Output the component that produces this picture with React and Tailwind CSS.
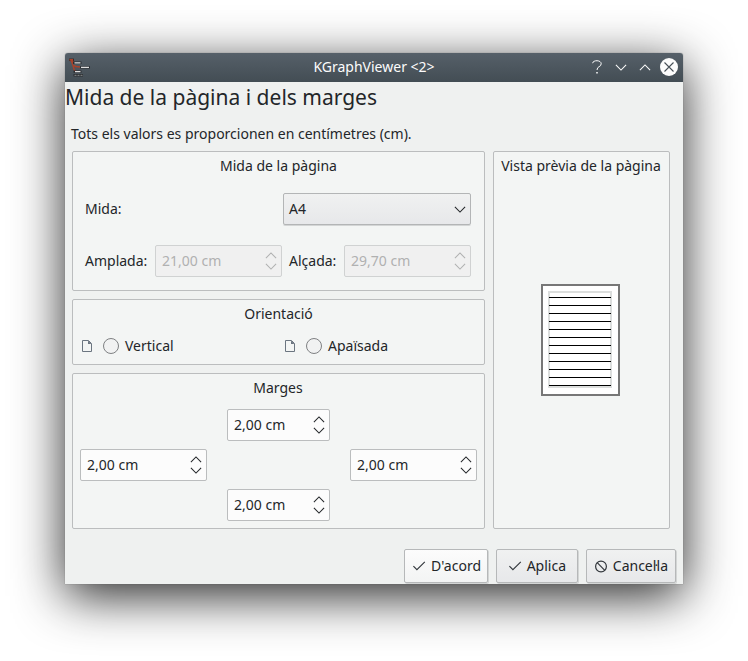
const Chevron = ({ up, className = "" }) => (
  <svg width="12" height="7" viewBox="0 0 12 7" fill="none" stroke="currentColor" strokeWidth="1.05" className={className}>
    <path d={up ? "M0.9 6.1 L6 1 L11.1 6.1" : "M0.9 0.9 L6 6 L11.1 0.9"} />
  </svg>
);

const Spin = ({ value, width, disabled }) => (
  <div
    className={`flex h-8 items-center justify-between rounded-[2px] border pl-1.5 pr-1 ${width} ${
      disabled ? "border-[#d0d2d2] bg-[#f0f0f0] text-[#b0b1b1]" : "border-[#bbbdbe] bg-[#fcfcfc] text-[#232629]"
    }`}
  >
    <span>{value}</span>
    <span className="flex flex-col gap-1">
      <Chevron up />
      <Chevron />
    </span>
  </div>
);

const Group = ({ title, titleClass = "", className = "", children }) => (
  <section className={`flex flex-col rounded-[2px] border border-[#bbbdbe] bg-[#f3f5f4] ${className}`}>
    <h2 className={`h-7 text-center leading-7 ${titleClass}`}>{title}</h2>
    {children}
  </section>
);

const PageIcon = () => (
  <svg width="10" height="12" viewBox="0 0 10 12" fill="none" stroke="#6b7580">
    <path d="M0.5 0.5 H6.5 L9.5 3.5 V11.5 H0.5 Z" />
    <path d="M6 0.5 V4 H9.5 Z" fill="#6b7580" stroke="none" />
  </svg>
);

const Orientation = ({ label, className = "" }) => (
  <div className={`flex items-center ${className}`}>
    <PageIcon />
    <span className="ml-[11px] mr-[6px] h-4 w-4 rounded-full border border-[#7f8183] bg-[#f1f2f2]" />
    <span>{label}</span>
  </div>
);

const Check = () => (
  <svg width="13" height="10" viewBox="0 0 13 10" fill="none" stroke="#31363b" strokeWidth="1.1">
    <path d="M0.4 5.2 L3.9 8.7 L11.8 0.8" />
  </svg>
);

const Forbidden = () => (
  <svg width="13" height="13" viewBox="0 0 13 13" fill="none" stroke="#31363b" strokeWidth="1.2">
    <circle cx="6" cy="6.5" r="5.4" />
    <path d="M2.2 2.7 L9.8 10.3" />
  </svg>
);

const Button = ({ icon, label, className }) => (
  <button className={`flex h-[34px] items-center justify-between rounded-[2px] border border-[#b6b8b9] bg-linear-to-b shadow-[1px_1px_0_#d3d5d5] ${className}`}>
    {icon}
    <span className="whitespace-nowrap">{label}</span>
  </button>
);

const AppLogo = () => (
  <svg width="23" height="20" viewBox="0 0 23 20" fill="none">
    <path d="M1 2.8 H6" stroke="#3a2b2a" strokeWidth="2.5" />
    <path d="M1.5 2.8 H5 M3 3 L5 8.5 L6.2 13 L8 15 M3.5 3 L6 6 M4.5 8 L8 9.5 L12 10" stroke="#a8432b" strokeWidth="1.4" />
    <path d="M5 5.7 H13.5 M12 10.4 H22 M5.5 14.6 H13.5 M5.5 18.3 H15" stroke="#2a2d30" strokeWidth="2.4" />
    <path d="M6.5 5.9 H12.5 M13 10.4 H21 M7 14.6 H12.5" stroke="#dedede" strokeWidth="1.2" />
    <path d="M6.5 18.3 H15" stroke="#8d9092" strokeDasharray="2 1" />
  </svg>
);

const TitleBar = () => (
  <header className="flex h-[29px] items-center rounded-t-[3px] bg-linear-to-b from-[#566069] to-[#434d54] pb-px text-[#fcfcfc]">
    <div className="w-[101px] pl-[3px]">
      <AppLogo />
    </div>
    <div className="flex-1 text-center">KGraphViewer &lt;2&gt;</div>
    <div className="flex w-[101px] items-center pl-[10px]">
      <svg width="10" height="14" viewBox="0 0 10 14" fill="none" stroke="currentColor" strokeWidth="1">
        <path d="M0.6 3.2 C1 -0.2 9.2 -0.2 9.2 3.8 C9.2 7.2 5 6 5 10" />
        <path d="M5 12 V13.5" strokeWidth="1.5" />
      </svg>
      <Chevron className="ml-[13px]" />
      <Chevron up className="ml-3" />
      <svg width="18" height="18" viewBox="0 0 18 18" className="ml-[9px]">
        <circle cx="9" cy="9" r="9" fill="#fcfcfc" />
        <path d="M4.5 4.5 L13.5 13.5 M13.5 4.5 L4.5 13.5" stroke="#475057" strokeWidth="1.1" />
      </svg>
    </div>
  </header>
);

const LINE_KEYS = Array.from({ length: 12 }, (_, i) => i);

const PagePreview = () => (
  <svg width="80" height="112" viewBox="0 0 80 112">
    <rect x="1" y="1" width="77" height="110" fill="#fff" stroke="#777" strokeWidth="2" />
    <rect x="8" y="8" width="62" height="95" fill="none" stroke="#dcdedd" strokeWidth="2" />
    {LINE_KEYS.map((i) => (
      <path key={i} d={`M8 ${13.5 + i * 8} H70`} stroke="#000" />
    ))}
  </svg>
);

export default function App() {
  return (
    <div lang="ca" className="h-[661px] w-[748px] overflow-hidden bg-white pl-[65px] pt-[53px] font-['Noto_Sans',sans-serif] text-[14px] leading-5 text-[#232629]">
      <main className="flex h-[531px] w-[618px] flex-col rounded-t-[3px] bg-[#eff1f0] shadow-[0_0_1px_#555,0_12px_50px_rgba(0,0,0,0.85)]">
        <TitleBar />
        <h1 className="h-[31px] whitespace-nowrap text-[21px] leading-[31px]">Mida de la pàgina i dels marges</h1>
        <p className="mt-[11px] h-5 pl-1.5">Tots els valors es proporcionen en centímetres (cm).</p>
        <div className="mt-[7px] flex gap-2 pl-[7px]">
          <div className="flex w-[413px] flex-col gap-2">
            <Group title="Mida de la pàgina" className="h-[140px]">
              <div className="mt-[13px] flex items-center justify-between pl-3 pr-[13px]">
                <span>Mida:</span>
                <div className="flex h-8 w-[188px] items-center justify-between rounded-[2px] border border-[#b3b5b6] bg-linear-to-b from-[#f0f1f1] to-[#e7e8ea] pl-[5px] pr-1 shadow-[0_1px_0_#d3d5d5]">
                  <span>A4</span>
                  <Chevron />
                </div>
              </div>
              <div className="mt-5 flex items-center pl-3">
                <span className="w-[70px]">Amplada:</span>
                <Spin value="21,00 cm" width="w-[127px]" disabled />
                <span className="w-[62px] pl-[7px]">Alçada:</span>
                <Spin value="29,70 cm" width="w-[127px]" disabled />
              </div>
            </Group>
            <Group title="Orientació" className="h-[66px]">
              <div className="mt-2 flex pl-[9px]">
                <Orientation label="Vertical" className="w-[203px]" />
                <Orientation label="Apaïsada" />
              </div>
            </Group>
            <Group title="Marges" titleClass="pr-px" className="h-[156px]">
              <div className="mt-[7px] flex flex-col gap-2 px-[7px]">
                <div className="flex pl-[147px]">
                  <Spin value="2,00 cm" width="w-[103px]" />
                </div>
                <div className="flex justify-between">
                  <Spin value="2,00 cm" width="w-[127px]" />
                  <Spin value="2,00 cm" width="w-[127px]" />
                </div>
                <div className="flex pl-[147px]">
                  <Spin value="2,00 cm" width="w-[103px]" />
                </div>
              </div>
            </Group>
          </div>
          <Group title="Vista prèvia de la pàgina" titleClass="pr-px" className="h-[378px] w-[177px]">
            <div className="mt-[104px] flex pl-[47px]">
              <PagePreview />
            </div>
          </Group>
        </div>
        <footer className="mt-5 flex gap-2 pl-[339px]">
          <Button icon={<Check />} label="D'acord" className="w-[84px] from-[#fcfcfc] to-[#f3f4f4] pl-2 pr-[6px]" />
          <Button icon={<Check />} label="Aplica" className="w-[82px] from-[#f0f1f1] to-[#e7e8ea] pl-3 pr-[11px]" />
          <Button icon={<Forbidden />} label="Cancel·la" className="w-[90px] from-[#f0f1f1] to-[#e7e8ea] pl-2 pr-[7px]" />
        </footer>
      </main>
    </div>
  );
}
